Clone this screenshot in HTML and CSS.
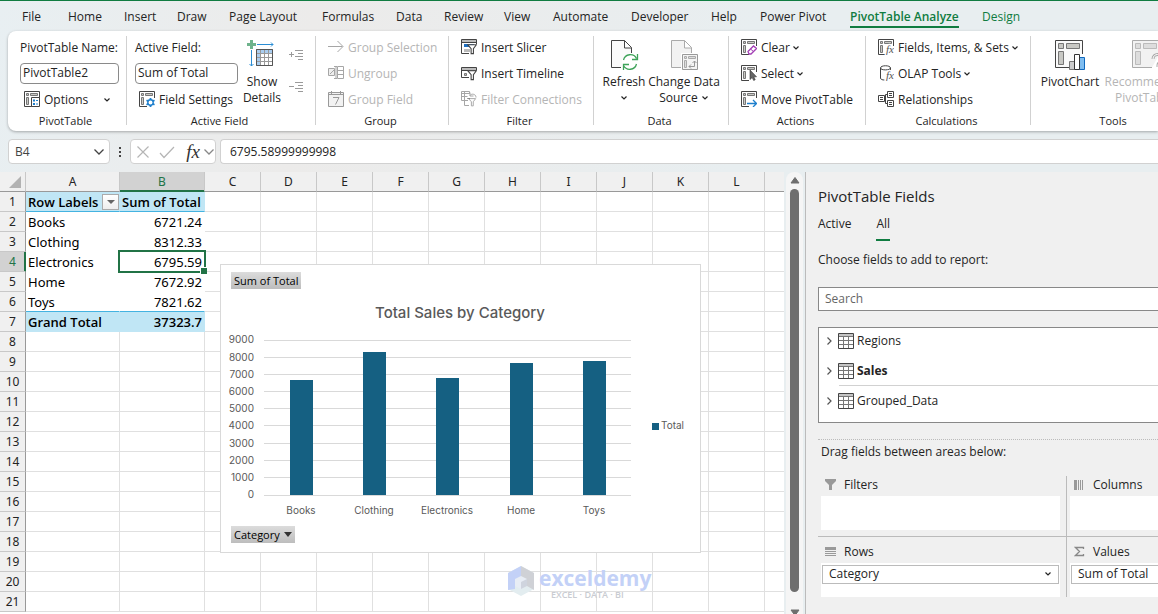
FILE: index.html
```html
<!DOCTYPE html>
<html lang="en">
<head>
    <meta charset="UTF-8">
    <meta name="viewport" content="width=device-width, initial-scale=1.0">
    <title>PivotTable Analyze</title>
    <link rel="stylesheet" href="styles.css">
</head>
<body>
    <svg class="defs" aria-hidden="true">
        <symbol id="chevron" viewBox="0 0 8 8"><path d="M1.5 2.5 4 5l2.500-2.500" fill="none" stroke="currentColor" stroke-width="1.200"/></symbol>
        <symbol id="chevron-big" viewBox="0 0 12 12"><path d="M1.500 3.500 6 8l4.500-4.500" fill="none" stroke="currentColor" stroke-width="1.300"/></symbol>
        <symbol id="chevron-right" viewBox="0 0 8 10"><path d="M2.500 1.500 6 5 2.500 8.500" fill="none" stroke="#555" stroke-width="1.200"/></symbol>
        <symbol id="pivot" viewBox="0 0 16 16">
            <path d="M15.500 7V.5H.5v15H8" fill="none" stroke="#444"/>
            <path d="M2.500 2.500h2v2h-2zM6.500 2.500h7v2h-7zM2.500 6.500h2v7h-2z" fill="#c8c8c4" stroke="#777"/>
        </symbol>
        <symbol id="table" viewBox="0 0 16 16">
            <path d="M.5.5h15v15H.5z" fill="#fff" stroke="#444"/>
            <path d="M1 1h14v3H1z" fill="#c4c4c4"/>
            <path d="M1 3.500h14M1 7.500h14M1 11.500h14M5.500 4v11M10.500 4v11" stroke="#777" fill="none"/>
        </symbol>
        <symbol id="funnel" viewBox="0 0 12 12"><path d="M.8.8h9.400L7 5v5.500H4.500V5z" fill="#fff" stroke="#444" stroke-width="1.200"/></symbol>
    </svg>

    <nav class="tabs">
        <button>File</button>
        <button>Home</button>
        <button>Insert</button>
        <button>Draw</button>
        <button>Page Layout</button>
        <button>Formulas</button>
        <button>Data</button>
        <button>Review</button>
        <button>View</button>
        <button>Automate</button>
        <button>Developer</button>
        <button>Help</button>
        <button>Power Pivot</button>
        <button class="active">PivotTable Analyze</button>
        <button class="context">Design</button>
    </nav>

    <div class="ribbon">
        <section class="group pivottable">
            <div class="content">
                <div class="stack">
                    <label for="pivotName">PivotTable Name:</label>
                    <div class="row"><input type="text" id="pivotName" value="PivotTable2"></div>
                    <button class="cmd inset">
                        <svg class="icon" viewBox="0 0 16 16"><use href="#pivot"/><path d="M7.500 6.500h8v9h-8z" fill="#fff" stroke="#444"/><path d="M9 8.500h2v2H9zM9 12h2v2H9z" fill="#1e7fcc"/><path d="M12 9.500h2M12 13h2" stroke="#1e7fcc"/></svg>
                        Options
                        <svg class="chev push"><use href="#chevron"/></svg>
                    </button>
                </div>
            </div>
            <h2>PivotTable</h2>
        </section>

        <section class="group active-field">
            <div class="content">
                <div class="stack">
                    <label for="activeField">Active Field:</label>
                    <div class="row"><input type="text" id="activeField" value="Sum of Total"></div>
                    <button class="cmd inset">
                        <svg class="icon" viewBox="0 0 16 16"><use href="#pivot"/><circle cx="11.500" cy="11.500" r="4.500" fill="#fff"/><circle cx="11.500" cy="11.500" r="2.700" fill="none" stroke="#1e7fcc" stroke-width="1.400"/><path d="M11.500 7v2M11.500 14v2M7.500 9.300l1.800 1M13.700 12.800l1.800 1M15.500 9.300l-1.800 1M9.300 12.800l-1.800 1" stroke="#1e7fcc" stroke-width="1.800"/></svg>
                        Field Settings
                    </button>
                </div>
                <button class="big">
                    <svg class="icon-big" viewBox="0 0 30 30"><path d="M4.500 0v9M0 4.500h9" stroke="#6fb38c" stroke-width="3"/><path d="M10 4.500h16M24 2.500l2 2-2 2M4.500 10v16M2.500 24l2 2 2-2" fill="none" stroke="#2a8dd4"/><path d="M9.500 9.500h16v16h-16z" fill="#fff" stroke="#777"/><path d="M10 10h15v4H10zM10 14h4v11h-4z" fill="#a9cdf0"/><path d="M10 13.500h15M10 17.500h15M10 21.500h15M13.500 10v15M17.500 10v15M21.500 10v15" stroke="#999"/><path d="M9.500 9.500h16v16h-16z" fill="none" stroke="#555"/></svg>
                    Show<br>Details
                </button>
                <div class="expanders">
                    <button aria-label="Expand field"><svg class="icon-small" viewBox="0 0 16 14"><path d="M0 5.500h5M2.500 3v5M6 1.500h8M9 4.500h5M6 7.500h8M9 10.500h5" stroke="#9a9a9a" fill="none"/></svg></button>
                    <button aria-label="Collapse field"><svg class="icon-small" viewBox="0 0 16 14"><path d="M0 5.500h5M6 1.500h8M9 4.500h5M6 7.500h8M9 10.500h5" stroke="#9a9a9a" fill="none"/></svg></button>
                </div>
            </div>
            <h2>Active Field</h2>
        </section>

        <section class="group grouping">
            <div class="content">
                <div class="stack">
                    <button class="cmd" disabled><svg class="icon" viewBox="0 0 16 16"><path d="M0 7.500h14.500M9.500 2l5.500 5.500L9.500 13" fill="none" stroke="#a6a6a6"/></svg>Group Selection</button>
                    <button class="cmd" disabled><svg class="icon" viewBox="0 0 16 16"><path d="M.5 3.500h6v7h-6zM2 9l4-4" fill="#eee" stroke="#a6a6a6"/><path d="M8 2v11M6 13.500h3M6 1.500h3" stroke="#a6a6a6"/><path d="M9.500 1.500h6v12h-6zM9.500 5.500h6M9.500 9.500h6" fill="none" stroke="#a6a6a6"/></svg>Ungroup</button>
                    <button class="cmd" disabled><svg class="icon" viewBox="0 0 16 16"><path d="M.5 1.500h15v14H.5z" fill="#f2f2f2" stroke="#999"/><path d="M.5 3.500h15M3.500 0v3M12.500 0v3M5 6.500h6L7.500 13.500" fill="none" stroke="#999"/></svg>Group Field</button>
                </div>
            </div>
            <h2>Group</h2>
        </section>

        <section class="group filter">
            <div class="content">
                <div class="stack">
                    <button class="cmd"><svg class="icon" viewBox="0 0 16 16"><path d="M15.500 5V.5H.5v14H8" fill="none" stroke="#444"/><path d="M1 1h14v2H1z" fill="#bbb"/><path d="M.5 3.500h15" stroke="#444"/><path d="M3 5h10v3H3z" fill="#1e6fc0"/><path d="M3 10h6v3H3z" fill="#bbb"/><use href="#funnel" x="6" y="5" width="11" height="11"/></svg>Insert Slicer</button>
                    <button class="cmd"><svg class="icon" viewBox="0 0 16 16"><path d="M15.500 5V2.500H.5v10H8" fill="none" stroke="#444"/><path d="M1 3h14v2H1z" fill="#bbb"/><path d="M.5 5.500h15" stroke="#444"/><path d="M3.500 8.500h2v2h-2z" fill="#bbb" stroke="#777"/><use href="#funnel" x="6" y="5" width="11" height="11"/></svg>Insert Timeline</button>
                    <button class="cmd" disabled><svg class="icon" viewBox="0 0 16 16"><path d="M7 9.500H.5v-9h8V3M.5 2.500h8M3.500 1v8M.5 5.500h6" fill="none" stroke="#a6a6a6"/><path d="M8 14.500H3.500V10M6 7.500h3" fill="none" stroke="#a6a6a6"/><path d="M9 4.500c1-2 6-2 6 2M9 1.500v3.500h3.500" fill="none" stroke="#a6a6a6"/><g opacity=".5"><use href="#funnel" x="7" y="7" width="9" height="9"/></g></svg>Filter Connections</button>
                </div>
            </div>
            <h2>Filter</h2>
        </section>

        <section class="group data">
            <div class="content">
                <button class="big">
                    <svg class="icon-big" viewBox="0 0 30 30"><path d="M12 27.500H2.500V.5h13l7 7V13M15.500.5V8h7" fill="#fafafa" stroke="#444"/><circle cx="21" cy="22" r="8" fill="#fff"/><path d="M14.500 20a7 7 0 0 1 13-1.500M28.500 14v5.500H23M27.500 24a7 7 0 0 1-13 1.500M14.500 30v-5.500H20" fill="none" stroke="#3fa35a" stroke-width="1.300"/></svg>
                    Refresh<br><svg class="chev"><use href="#chevron"/></svg>
                </button>
                <button class="big wide">
                    <svg class="icon-big" viewBox="0 0 30 30"><path d="M12 27.500H2.500V.5h13l7 7V13M15.500.5V8h7" fill="#f2f2f2" stroke="#aaa"/><path d="M12 13h17v17H12z" fill="#fff"/><path d="M13.500 14.500h15v15h-15z" fill="#f4f4f4" stroke="#999"/><path d="M15.500 16.500h2v2h-2zM19.500 16.500h7v2h-7zM15.500 20.500h2v7h-2z" fill="#ddd" stroke="#aaa"/><path d="M20 26.500h5.500V21M23.500 23l2-2 2 2M22 24.500l-2 2 2 2" fill="none" stroke="#999"/></svg>
                    Change Data<br>Source <svg class="chev"><use href="#chevron"/></svg>
                </button>
            </div>
            <h2>Data</h2>
        </section>

        <section class="group actions">
            <div class="content">
                <div class="stack">
                    <button class="cmd"><svg class="icon" viewBox="0 0 16 16"><use href="#pivot"/><path d="M7 12.500 12.500 7l3 2.500-5.500 5.500H8z" fill="#fff" stroke="#a33fb5" stroke-width="1.300"/><path d="M9.500 10l3 2.500" stroke="#a33fb5"/></svg>Clear<svg class="chev"><use href="#chevron"/></svg></button>
                    <button class="cmd"><svg class="icon" viewBox="0 0 16 16"><use href="#pivot"/><path d="M9 5v9.500l2.200-2 1.500 3 1.500-.8-1.400-2.900H15.500z" fill="#666" stroke="#333" stroke-width=".6"/></svg>Select<svg class="chev"><use href="#chevron"/></svg></button>
                    <button class="cmd"><svg class="icon" viewBox="0 0 16 16"><use href="#pivot"/><path d="M6 12.500h9M12 9l3.500 3.500L12 16" fill="none" stroke="#1e7fcc" stroke-width="1.300"/></svg>Move PivotTable</button>
                </div>
            </div>
            <h2>Actions</h2>
        </section>

        <section class="group calculations">
            <div class="content">
                <div class="stack">
                    <button class="cmd"><svg class="icon" viewBox="0 0 16 16"><use href="#pivot"/><text x="8" y="14" class="fx-small">fx</text></svg>Fields, Items, &amp; Sets<svg class="chev"><use href="#chevron"/></svg></button>
                    <button class="cmd"><svg class="icon" viewBox="0 0 16 16"><path d="M12.500 6V3c0-3-10-3-10 0v10c0 1.500 2 2 4 2M2.500 3c0 2.500 10 2.500 10 0" fill="none" stroke="#444"/><text x="8" y="14" class="fx-small">fx</text></svg>OLAP Tools<svg class="chev"><use href="#chevron"/></svg></button>
                    <button class="cmd"><svg class="icon" viewBox="0 0 16 16"><path d="M.5 4.500h6v6h-6zM9.500.5h6v6h-6zM9.500 9.500h6v6h-6zM6.500 7.500h1M9.500 3.500h-2v9h2M2 6.500h3M2 8.500h3M11 2.500h3M11 4.500h3M11 11.500h3M11 13.500h3" fill="none" stroke="#444"/></svg>Relationships</button>
                </div>
            </div>
            <h2>Calculations</h2>
        </section>

        <section class="group tools">
            <div class="content">
                <button class="big">
                    <svg class="icon-big" viewBox="0 0 30 30"><path d="M27.500 14V.5H.5v27H14" fill="#fafafa" stroke="#444"/><path d="M3.500 3.500h5v5h-5zM11.500 3.500h13v5h-13zM3.500 11.500h5v13h-5z" fill="#c8c8c4" stroke="#777"/><path d="M14.500 21.500h5v8h-5z" fill="#ccc" stroke="#777"/><path d="M24.500 17.500h5v12h-5z" fill="#7fbdf0" stroke="#1068bd"/><path d="M19.500 14.500h5v15h-5z" fill="#fff" stroke="#333"/></svg>
                    PivotChart
                </button>
                <button class="big widest" disabled>
                    <svg class="icon-big" viewBox="0 0 30 30"><path d="M27.500 14V.5H.5v27H20" fill="#f2f2f2" stroke="#aaa"/><path d="M3.500 3.500h5v5h-5zM11.500 3.500h13v5h-13zM3.500 11.500h5v13h-5z" fill="#ddd" stroke="#bbb"/><path d="M21 19c0-6 9-6 9 0 0 3-4 3-4 6v2" fill="none" stroke="#aaa" stroke-width="3"/><path d="M21 19c0-6 9-6 9 0 0 3-4 3-4 6v2" fill="none" stroke="#fff"/></svg>
                    Recommended<br>PivotTables
                </button>
            </div>
            <h2>Tools</h2>
        </section>
    </div>

    <div class="formula-bar">
        <div class="box name-box">
            <input type="text" value="B4" aria-label="Name box">
            <button aria-label="Names"><svg class="chev-big"><use href="#chevron-big"/></svg></button>
        </div>
        <svg class="dots" viewBox="0 0 2 14"><path d="M0 2h2v2H0zM0 6h2v2H0zM0 10h2v2H0z" fill="#444"/></svg>
        <div class="box fx-box">
            <button aria-label="Cancel"><svg viewBox="0 0 16 16"><path d="M2.500 2.500l11 11M13.500 2.500l-11 11" stroke="#b5b5b5" stroke-width="1.200"/></svg></button>
            <button aria-label="Enter"><svg viewBox="0 0 16 16"><path d="M1 9l4 4.500L15 3" fill="none" stroke="#b5b5b5" stroke-width="1.200"/></svg></button>
            <button class="fx" aria-label="Insert function">fx</button>
            <button class="fx-more" aria-label="More"><svg class="chev-big"><use href="#chevron-big"/></svg></button>
        </div>
        <input type="text" class="box formula" value="6795.58999999998" aria-label="Formula">
    </div>

    <main>
        <div class="sheet">
            <table>
                <colgroup>
                    <col class="col-head"><col class="col-a"><col class="col-b">
                </colgroup>
                <thead><tr id="columns"></tr></thead>
                <tbody id="cells"></tbody>
            </table>

            <div class="chart">
                <button class="field-button value-field">Sum of Total</button>
                <svg viewBox="1 1 479 287" width="479" height="287" role="img" aria-label="Total Sales by Category">
                    <text class="chart-title" x="240" y="54">Total Sales by Category</text>
                    <path class="gridlines" d="M44 76.500h367M44 93.500h367M44 110.500h367M44 127.500h367M44 144.500h367M44 161.500h367M44 179.500h367M44 196.500h367M44 213.500h367M44 231.500h367"/>
                    <g class="values">
                        <text x="34" y="79">9000</text>
                        <text x="34" y="97">8000</text>
                        <text x="34" y="114">7000</text>
                        <text x="34" y="131">6000</text>
                        <text x="34" y="148">5000</text>
                        <text x="34" y="165">4000</text>
                        <text x="34" y="183">3000</text>
                        <text x="34" y="200">2000</text>
                        <text x="34" y="217">1000</text>
                        <text x="34" y="234">0</text>
                    </g>
                    <g class="bars">
                        <rect x="70" y="116" width="23" height="115"/>
                        <rect x="143" y="88" width="23" height="143"/>
                        <rect x="216" y="114" width="23" height="117"/>
                        <rect x="290" y="99" width="23" height="132"/>
                        <rect x="363" y="97" width="23" height="134"/>
                        <rect x="432" y="159" width="7" height="7"/>
                    </g>
                    <g class="categories">
                        <text x="81" y="250">Books</text>
                        <text x="154" y="250">Clothing</text>
                        <text x="227" y="250">Electronics</text>
                        <text x="301" y="250">Home</text>
                        <text x="374" y="250">Toys</text>
                    </g>
                    <text class="legend" x="441" y="165">Total</text>
                </svg>
                <button class="field-button axis-field">Category <svg viewBox="0 0 8 5"><path d="M0 0h8L4 5z" fill="#333"/></svg></button>
            </div>

            <div class="watermark">
                <svg viewBox="0 0 28 31"><path d="M14 0 27 7v16L14 30 1 23V7z" fill="#e3edf0"/><path d="M14 0v12l-6 4v7L1 24V7z" fill="#c3d1f7"/><path d="M14 0l13 7v17l-7-4v-5l-6-4z" fill="#cfd1d6"/><path d="M14 10l6 3v7l-6 3-6-3v-7z" fill="#e8edf5"/><path d="M14 16l6-3v7l-6 3z" fill="#cfd4de"/></svg>
                <div><strong>exceldemy</strong><span>EXCEL · DATA · BI</span></div>
            </div>
        </div>

        <div class="scrollbar">
            <svg viewBox="0 0 10 7"><path d="M5 0.500 9 6H1z" fill="#6e6e6e" stroke="#6e6e6e" stroke-linejoin="round"/></svg>
            <div class="thumb"></div>
            <svg viewBox="0 0 10 7"><path d="M5 6.500 9 1H1z" fill="#6e6e6e" stroke="#6e6e6e" stroke-linejoin="round"/></svg>
        </div>

        <aside class="pane">
            <div class="pane-body">
                <h1>PivotTable Fields</h1>
                <div class="pane-tabs">
                    <button>Active</button>
                    <button class="active">All</button>
                </div>
                <label for="search">Choose fields to add to report:</label>
                <input type="search" id="search" placeholder="Search">
                <ul class="fields">
                    <li><button><svg class="arrow"><use href="#chevron-right"/></svg><svg class="icon"><use href="#table"/></svg>Regions</button></li>
                    <li class="used"><button><svg class="arrow"><use href="#chevron-right"/></svg><svg class="icon"><use href="#table"/></svg>Sales</button></li>
                    <li><button><svg class="arrow"><use href="#chevron-right"/></svg><svg class="icon"><use href="#table"/></svg>Grouped_Data</button></li>
                </ul>
                <p class="drag">Drag fields between areas below:</p>
                <div class="areas">
                    <section>
                        <h3><svg viewBox="0 0 12 12"><path d="M0 0h11v2L7 6v5H4V6L0 2z" fill="#999"/></svg>Filters</h3>
                        <div class="drop"></div>
                    </section>
                    <section>
                        <h3><svg viewBox="0 0 12 12"><path d="M0 1h3v10H0zM4 1h1v10H4zM6 1h1v10H6zM8 1h1v10H8z" fill="#999"/></svg>Columns</h3>
                        <div class="drop"></div>
                    </section>
                    <section>
                        <h3><svg viewBox="0 0 12 12"><path d="M0 1h11v3H0zM0 5h11v1H0zM0 7h11v1H0zM0 9h11v1H0z" fill="#999"/></svg>Rows</h3>
                        <div class="drop"><button>Category<svg class="chev"><use href="#chevron"/></svg></button></div>
                    </section>
                    <section>
                        <h3><svg viewBox="0 0 12 12"><path d="M9.500 3V1.500H1.500L5.500 5.500l-4 4h8V8" fill="none" stroke="#888" stroke-width="1.300"/></svg>Values</h3>
                        <div class="drop"><button>Sum of Total<svg class="chev"><use href="#chevron"/></svg></button></div>
                    </section>
                </div>
            </div>
        </aside>
    </main>

    <script>
        const letters = ['A', 'B', 'C', 'D', 'E', 'F', 'G', 'H', 'I', 'J', 'K', 'L', ''];
        const rows = [
            ['Row Labels', 'Sum of Total'],
            ['Books', '6721.24'],
            ['Clothing', '8312.33'],
            ['Electronics', '6795.59'],
            ['Home', '7672.92'],
            ['Toys', '7821.62'],
            ['Grand Total', '37323.7']
        ];
        const rowCount = 21;

        document.getElementById('columns').innerHTML = '<th class="corner"></th>' +
            letters.map(l => `<th class="${l === 'B' ? 'current' : ''}">${l}</th>`).join('');

        let html = '';
        for (let r = 1; r <= rowCount; r++) {
            const row = rows[r - 1] || ['', ''];
            const type = r === 1 ? 'head' : r === 6 ? 'last' : r === 7 ? 'total' : r < 7 ? 'item' : '';
            const filter = r === 1 ? '<button class="filter-button" aria-label="Filter"></button>' : '';
            html += `<tr class="${type}"><th class="${r === 4 ? 'current' : ''}">${r}</th>`;
            html += `<td>${row[0]}${filter}</td><td class="${r === 4 ? 'selected' : ''}">${row[1]}</td>`;
            html += '<td></td>'.repeat(letters.length - 2) + '</tr>';
        }
        document.getElementById('cells').innerHTML = html;
    </script>
</body>
</html>
```
FILE: styles.css
```css
* {
    box-sizing: border-box;
}
body {
    margin: 0;
    height: 100vh;
    display: flex;
    flex-direction: column;
    overflow: hidden;
    border-top: 1px solid #107c41;
    background: linear-gradient(100deg, #e8eff2 0%, #ecebea 25%, #e8eef0 60%);
    color: #242424;
    font-family: "Open Sans", "Noto Sans", sans-serif;
    font-size: 12px;
    line-height: 16px;
}
button, input {
    font: inherit;
    color: inherit;
}
button {
    padding: 0;
    border: none;
    background: none;
    white-space: nowrap;
}
h1, h2, h3, p, ul {
    margin: 0;
    padding: 0;
    font-weight: normal;
}
svg {
    flex: none;
}
.defs {
    position: absolute;
    width: 0;
    height: 0;
}

/* tabs */
.tabs {
    flex: none;
    display: grid;
    grid-template-columns: 46px 56px 53px 52px 93px 74px 48px 60px 49px 78px 80px 49px 90px 132px 60px;
    height: 30px;
    padding-left: 22px;
}
.tabs button {
    justify-self: start;
    height: 27px;
    padding-top: 6px;
    border-bottom: 2px solid transparent;
}
.tabs .active {
    color: #107c41;
    font-weight: 600;
    border-color: #107c41;
}
.tabs .context {
    color: #107c41;
}

/* ribbon */
.ribbon {
    flex: none;
    display: flex;
    height: 100px;
    margin-left: 8px;
    overflow: hidden;
    background: #fff;
    border-radius: 8px 0 0 8px;
    box-shadow: 0 1px 3px rgba(0,0,0,0.3);
}
.group {
    flex: none;
    position: relative;
    padding-top: 3px;
}
.group::after {
    content: "";
    position: absolute;
    top: 5px;
    bottom: 6px;
    right: 0;
    width: 1px;
    background: #d1d1d1;
}
.group h2 {
    font-size: 11px;
    line-height: 18px;
    text-align: center;
    padding-right: 4px;
}
.content {
    display: flex;
    height: 78px;
    padding-left: 12px;
}
.pivottable { width: 119px; }
.active-field { width: 189px; }
.grouping { width: 133px; }
.filter { width: 145px; }
.data { width: 135px; }
.actions { width: 137px; }
.calculations { width: 165px; }
.tools { width: 168px; }
.active-field .content {
    padding-left: 8px;
}
.data .content {
    padding-left: 6px;
}
.tools .content {
    padding-left: 8px;
}
.stack {
    display: grid;
    grid-template-rows: repeat(3, 26px);
    align-items: center;
}
.stack label {
    padding-top: 2px;
}
.pivottable .stack {
    width: 99px;
}
.active-field .stack {
    width: 103px;
}
.row {
    display: flex;
}
.row input {
    width: 100%;
    height: 21px;
    padding: 0 2px 2px;
    border: 1px solid #8a8a8a;
    border-radius: 4px;
    background: #fff;
}
.cmd {
    display: flex;
    align-items: center;
    gap: 4px;
    padding-top: 2px;
}
.cmd .icon {
    margin-bottom: 2px;
}
.cmd.inset {
    padding-left: 4px;
}
button:disabled {
    color: #b5b5b5;
}
.icon {
    width: 16px;
    height: 16px;
}
.chev {
    width: 8px;
    height: 8px;
}
.cmd .chev {
    margin-left: -2px;
}
.cmd .push {
    margin-left: auto;
    margin-right: 8px;
}
.big {
    width: 48px;
    display: block;
    align-self: start;
    text-align: center;
}
.big.wide {
    width: 72px;
}
.big.widest {
    width: 92px;
}
.icon-big {
    display: block;
    width: 30px;
    height: 30px;
    margin: 6px auto 4px;
}
.tools .big:first-child {
    width: 62px;
}
.expanders {
    display: grid;
    grid-template-rows: 32px 32px;
    padding: 15px 0 0 3px;
}
.expanders button {
    display: flex;
}
.icon-small {
    width: 16px;
    height: 14px;
}
.fx-small {
    font: italic 11px "Liberation Serif", serif;
    fill: #555;
    stroke: #fff;
    stroke-width: 3px;
    paint-order: stroke;
}

/* formula bar */
.formula-bar {
    flex: none;
    display: flex;
    height: 41px;
    padding: 8px 0 8px 8px;
}
.box {
    display: flex;
    align-items: center;
    border: 1px solid #d1d1d1;
    border-radius: 4px;
    background: #fff;
}
.name-box {
    width: 102px;
    padding-right: 4px;
    color: #444;
}
.name-box input {
    flex: 1;
    min-width: 0;
    border: none;
    background: none;
    padding-left: 6px;
}
.chev-big {
    display: block;
    width: 12px;
    height: 12px;
}
.dots {
    width: 2px;
    height: 14px;
    margin: 6px 9px 0;
}
.fx-box {
    width: 86px;
    padding: 0 0 0 4px;
    color: #888;
}
.fx-box button {
    width: 24px;
}
.fx-box svg {
    display: block;
    width: 16px;
    height: 16px;
}
.fx-box .fx {
    width: 20px;
    color: #333;
    font: italic 19px "Liberation Serif", serif;
}
.fx-box .fx-more, .fx-box .chev-big {
    width: 12px;
}
.formula {
    flex: 1;
    margin-left: 4px;
    padding: 0 9px;
    border-right: none;
    border-radius: 4px 0 0 4px;
}

/* sheet */
main {
    flex: 1;
    display: flex;
    min-height: 0;
}
.sheet {
    flex: 1;
    position: relative;
    overflow: hidden;
    background: #fff;
    color: #000;
}
table {
    table-layout: fixed;
    width: 821px;
    border-collapse: separate;
    border-spacing: 0;
    font-family: "Noto Sans", "Open Sans", sans-serif;
    font-size: 13px;
}
.col-head { width: 26px; }
.col-a { width: 94px; }
.col-b { width: 85px; }
th, td {
    position: relative;
    height: 20px;
    padding: 0 2px;
    line-height: 18px;
    white-space: nowrap;
    border-right: 1px solid #e0e0e0;
    border-bottom: 1px solid #e0e0e0;
}
th {
    padding: 0;
    background: #f0f0f0;
    color: #242424;
    font-size: 12px;
    font-weight: normal;
    text-align: center;
    border-color: #c8c8c8;
}
tbody th {
    padding-top: 1px;
    border-right-color: #999;
}
thead th {
    border-bottom-color: #999;
}
th.current {
    background: #d2d2d2;
    color: #217346;
}
thead .current {
    box-shadow: inset 0 -1px #217346;
    border-bottom-color: #217346;
}
tbody .current {
    box-shadow: inset -1px 0 #217346;
    border-right-color: #217346;
}
.corner::after {
    content: "";
    position: absolute;
    right: 4px;
    bottom: 3px;
    border: 6px solid;
    border-color: transparent #b2b2b2 #b2b2b2 transparent;
}
td:nth-child(3) {
    text-align: right;
}
.item td:nth-child(2), .item td:nth-child(3),
.last td:nth-child(2), .last td:nth-child(3) {
    border-color: #fff;
}
.head td:nth-child(-n+3), .total td:nth-child(-n+3) {
    background: #c0e6f5;
    border-color: #c0e6f5;
    font-family: "Open Sans", sans-serif;
    font-weight: 600;
}
.head td:nth-child(3) {
    text-align: left;
}
.head td:nth-child(-n+3), .last td:nth-child(-n+3) {
    border-bottom-color: #44b3e1;
}
.filter-button {
    position: absolute;
    right: 0;
    top: 2px;
    width: 17px;
    height: 16px;
    border: 1px solid #ababab;
    background: linear-gradient(#fff, #eee);
}
.filter-button::after {
    content: "";
    position: absolute;
    left: 4px;
    top: 5px;
    border: 4px solid transparent;
    border-top-color: #666;
    border-bottom: none;
}
td.selected {
    z-index: 1;
}
.selected::before {
    content: "";
    position: absolute;
    inset: -2px -2px -2px -2px;
    border: 2px solid #217346;
}
.selected::after {
    content: "";
    position: absolute;
    right: -3px;
    bottom: -3px;
    width: 6px;
    height: 6px;
    background: #217346;
    border: 1px solid #fff;
    border-width: 1px 0 0 1px;
}

/* chart */
.chart {
    position: absolute;
    left: 220px;
    top: 92px;
    width: 481px;
    height: 289px;
    background: #fff;
    border: 1px solid #d9d9d9;
    font-family: Inter, sans-serif;
    z-index: 2;
}
.chart svg {
    display: block;
}
.chart text {
    fill: #595959;
    font-size: 10px;
}
.chart .chart-title {
    font-size: 15px;
    font-weight: 500;
    text-anchor: middle;
}
.chart .values {
    text-anchor: end;
}
.chart .categories {
    text-anchor: middle;
}
.gridlines {
    stroke: #d9d9d9;
}
.bars {
    fill: #156082;
}
.field-button {
    position: absolute;
    left: 10px;
    height: 17px;
    padding: 0 3px;
    display: flex;
    align-items: center;
    gap: 4px;
    color: #000;
    background: linear-gradient(#dcdcdc, #bdbdbd);
    font: 11px "Open Sans", sans-serif;
}
.value-field {
    top: 7px;
}
.axis-field {
    bottom: 9px;
}
.axis-field svg {
    width: 8px;
    height: 5px;
}

.watermark {
    position: absolute;
    left: 507px;
    top: 394px;
    display: flex;
    gap: 4px;
    color: #c3d1f7;
}
.watermark svg {
    width: 28px;
    height: 31px;
}
.watermark strong {
    display: block;
    font-size: 21px;
    line-height: 24px;
}
.watermark span {
    display: block;
    padding-left: 12px;
    color: #c9ccd2;
    font-size: 9px;
    font-weight: 600;
    line-height: 10px;
}

/* scrollbar */
.scrollbar {
    flex: none;
    width: 17px;
    margin: 0 2px;
    padding: 5px 0 0;
    display: flex;
    flex-direction: column;
    align-items: center;
    gap: 5px;
    overflow: hidden;
    background: #f5f5f5;
    border-radius: 8px 8px 0 0;
}
.scrollbar svg {
    width: 10px;
    height: 7px;
}
.thumb {
    flex: none;
    width: 9px;
    height: 403px;
    margin-bottom: 12px;
    border-radius: 5px;
    background: #6e6e6e;
}

/* field pane */
.pane {
    flex: none;
    width: 353px;
    overflow: hidden;
    background: #f0f0f0;
    border-left: 1px solid #bbb;
}
.pane-body {
    width: 500px;
    padding: 14px 0 0 12px;
}
.pane h1 {
    font-size: 15px;
    line-height: 20px;
}
.pane-tabs {
    display: flex;
    gap: 25px;
    padding: 10px 0 11px;
}
.pane-tabs button {
    padding-bottom: 7px;
    border-bottom: 2px solid transparent;
}
.pane-tabs .active {
    border-color: #107c41;
}
.pane label {
    display: block;
}
.pane input {
    display: block;
    width: 100%;
    height: 24px;
    margin: 19px 0 16px;
    padding: 0 6px 2px;
    border: 1px solid #888;
    background: #fff;
}
.pane input::placeholder {
    color: #666;
    opacity: 1;
}
.fields {
    height: 96px;
    border: 1px solid #888;
    background: #fff;
    list-style: none;
}
.fields li {
    display: flex;
    height: 30px;
    padding: 0 0 4px 6px;
}
.fields button {
    flex: 1;
    display: flex;
    align-items: center;
    gap: 3px;
}
.arrow {
    width: 8px;
    height: 10px;
    margin-right: 2px;
}
.fields .used {
    font-weight: bold;
    background: linear-gradient(#d1d1d1, #d1d1d1) 20px 27px / 100% 1px no-repeat;
}
.drag {
    margin-top: 16px;
    padding: 4px 3px 16px;
    border-top: 1px dotted #bbb;
}
.areas {
    display: grid;
    grid-template-columns: 249px 1fr;
}
.areas section {
    padding: 0 6px 0 3px;
}
.areas section:nth-child(odd) {
    border-right: 1px solid #bbb;
}
.areas section:nth-child(-n+2) {
    padding-bottom: 6px;
    border-bottom: 1px solid #bbb;
}
.areas h3 {
    display: flex;
    align-items: center;
    gap: 7px;
    padding: 0 4px 2px;
    font-size: 12px;
    line-height: 18px;
}
.areas section:nth-child(n+3) h3 {
    padding-top: 6px;
}
.areas h3 svg {
    width: 12px;
    height: 12px;
}
.drop {
    height: 34px;
    padding: 2px 1px;
    background: #fff;
}
.drop button {
    display: flex;
    align-items: center;
    justify-content: space-between;
    width: 100%;
    height: 19px;
    padding: 0 6px 1px;
    border: 1px solid #bbb;
}
```
